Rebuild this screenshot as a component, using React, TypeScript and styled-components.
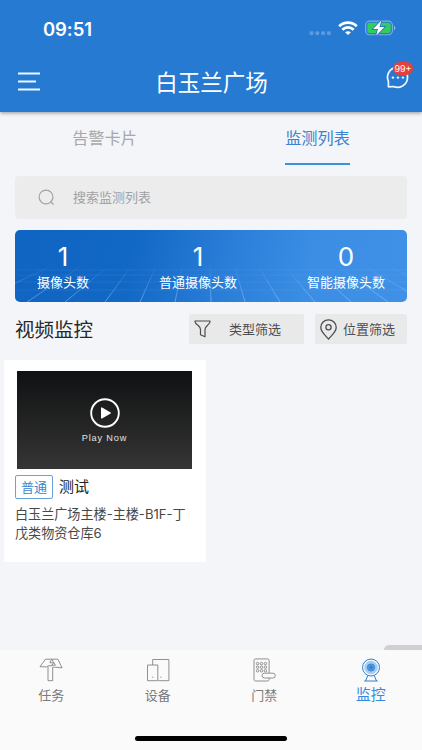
import React from 'react';
import styled, { createGlobalStyle } from 'styled-components';

const GlobalStyle = createGlobalStyle`
  * { box-sizing: border-box; }
  body { margin: 0; background: #f3f5f8; font-family: Inter, "Noto Sans CJK SC", sans-serif; }
`;

const Screen = styled.div`
  display: flex;
  flex-direction: column;
  width: 422px;
  height: 750px;
  overflow: hidden;
  background: #f3f5f8;
`;

const Header = styled.header`
  height: 112px;
  flex: none;
  color: #fff;
  background: #267ad1;
  box-shadow: 0 1px 4px rgba(0, 0, 0, 0.4);
`;

const StatusBar = styled.div`
  display: flex;
  align-items: center;
  justify-content: space-between;
  height: 56px;
  padding: 0 16px 0 43px;
`;

const Clock = styled.span`
  padding-top: 1px;
  font-size: 18.5px;
  font-weight: 600;
  letter-spacing: -0.1px;
  line-height: 20px;
`;

const NavBar = styled.div`
  display: grid;
  grid-template-columns: 60px 1fr 60px;
  height: 53px;
  padding: 0 8px 0 18px;
`;

const MenuButton = styled.div`
  display: flex;
  padding-top: 15px;
`;

const Title = styled.h1`
  margin: 11px 0 0;
  padding-right: 9px;
  font-size: 22.5px;
  font-weight: 400;
  line-height: 32px;
  text-align: center;
  white-space: nowrap;
`;

const MessageButton = styled.div`
  position: relative;
  justify-self: end;
  width: 30px;
  height: 30px;
  margin-top: 5px;
`;

const Badge = styled.span`
  position: absolute;
  top: 1px;
  left: 9px;
  width: 20px;
  height: 13px;
  border-radius: 7px;
  background: #e7403a;
  font-size: 9px;
  line-height: 13px;
  text-align: center;
`;

const Tabs = styled.nav`
  display: grid;
  grid-template-columns: 209px 217px;
  flex: none;
  height: 53px;
  justify-items: center;
`;

const Tab = styled.div<{ $active?: boolean }>`
  height: 53px;
  padding-top: 14px;
  font-size: 16.2px;
  line-height: 24px;
  color: ${p => (p.$active ? '#3983d1' : '#a6a8ab')};
  border-bottom: 2.5px solid ${p => (p.$active ? '#3793db' : 'transparent')};
`;

const SearchBox = styled.div`
  display: flex;
  align-items: center;
  gap: 18px;
  flex: none;
  height: 43px;
  margin: 11px 15px 0;
  padding-left: 23px;
  border-radius: 4px;
  background: #ececec;
  color: #a1a2a5;
  font-size: 13px;
`;

const SearchHint = styled.span`
  padding-bottom: 2px;
`;

const Stats = styled.section`
  display: grid;
  flex: none;
  height: 72px;
  margin: 11px 15px 0;
  border-radius: 5px;
  overflow: hidden;
  color: #fff;
  background: linear-gradient(100deg, #1064c2 0%, #1268c5 30%, #2b7fd9 55%, #3b8ee4 75%, #3f91e7 100%);
  & > * { grid-area: 1 / 1; }
`;

const StatRow = styled.div`
  display: flex;
  justify-content: space-between;
  padding: 11px 22px 0;
`;

const Stat = styled.div`
  display: flex;
  flex-direction: column;
  align-items: center;
`;

const StatValue = styled.span`
  font-size: 26px;
  line-height: 32px;
`;

const StatLabel = styled.span`
  font-size: 13px;
  line-height: 18px;
`;

const SectionHead = styled.div`
  display: flex;
  align-items: center;
  flex: none;
  height: 30px;
  margin: 12px 15px 0;
`;

const SectionTitle = styled.h2`
  margin: 0 auto 0 0;
  padding-top: 1px;
  font-size: 19.5px;
  font-weight: 400;
  line-height: 28px;
  color: #28292b;
`;

const Filter = styled.div<{ $w: number; $gap: number }>`
  display: flex;
  align-items: center;
  gap: ${p => p.$gap}px;
  width: ${p => p.$w}px;
  height: 30px;
  margin-left: 11px;
  padding-left: 5px;
  border-radius: 2px;
  background: #e9e9ea;
  color: #4c4d50;
  font-size: 13px;
  white-space: nowrap;
`;

const FilterLabel = styled.span`
  padding-bottom: 2px;
`;

const Card = styled.article`
  flex: none;
  width: 202px;
  height: 202px;
  margin: 16px 0 0 4px;
  padding: 11px 11px 0;
  background: #fff;
`;

const Video = styled.div`
  display: flex;
  flex-direction: column;
  align-items: center;
  width: 175px;
  height: 98px;
  margin-left: 2px;
  padding-top: 26px;
  background: linear-gradient(#101112, #353535);
`;

const PlayText = styled.span`
  margin-top: 2px;
  color: #e2e2e2;
  font: 9.2px/15px "Liberation Sans", sans-serif;
  letter-spacing: 0.85px;
`;

const CameraLine = styled.div`
  display: flex;
  align-items: center;
  gap: 6px;
  margin-top: 6px;
`;

const Tag = styled.span`
  width: 38px;
  height: 24px;
  border: 1px solid #6ba2dc;
  border-radius: 2px;
  color: #3a86d2;
  font-size: 13px;
  line-height: 22px;
  text-align: center;
`;

const CameraName = styled.span`
  font-size: 15px;
  line-height: 24px;
  color: #222;
`;

const Address = styled.p`
  margin: 6px 0 0;
  font-size: 13.1px;
  line-height: 18.5px;
  color: #47484a;
  white-space: nowrap;
`;

const Handle = styled.div`
  width: 44px;
  height: 5px;
  margin: auto -6px 0 auto;
  border-radius: 8px 8px 0 0;
  background: #d0d0d2;
`;

const Footer = styled.footer`
  flex: none;
  height: 100px;
  background: #fafafb;
`;

const FooterTabs = styled.div`
  display: grid;
  grid-template-columns: repeat(4, 106.5px);
  height: 85.5px;
  margin-left: -2px;
`;

const FooterTab = styled.div<{ $active?: boolean }>`
  display: flex;
  flex-direction: column;
  align-items: center;
  padding-top: 7px;
  color: ${p => (p.$active ? '#338be0' : '#7a7a7b')};
  font-size: ${p => (p.$active ? 15 : 13)}px;
  line-height: ${p => (p.$active ? 23 : 25)}px;
`;

const HomeBar = styled.div`
  width: 152px;
  height: 5.5px;
  margin: 0 auto;
  border-radius: 3px;
  background: #000;
`;

const StatusIcons = () => (
  <svg width="98" height="20" viewBox="0 0 98 20" fill="none">
    <g fill="#5d9be0">
      <rect x="1.6" y="13.2" width="3.8" height="3.8" rx="1.2" /><rect x="7.4" y="13.2" width="3.8" height="3.8" rx="1.2" />
      <rect x="13.2" y="13.2" width="3.8" height="3.8" rx="1.2" /><rect x="19" y="13.2" width="3.8" height="3.8" rx="1.2" />
    </g>
    <g stroke="#fff" strokeWidth="2.7">
      <path d="M31.2 8.2c5-4.8 12.6-4.8 17.6 0" />
      <path d="M34.3 11.7c3.2-3 8.2-3 11.4 0" />
    </g>
    <path d="M37.1 14.2c1.7-1.4 4.1-1.4 5.8 0L40 17.1z" fill="#fff" />
    <rect x="57.6" y="3.1" width="26.8" height="13.6" rx="4" stroke="#7eb0e5" strokeWidth="1.1" />
    <rect x="59.3" y="4.8" width="23.4" height="10.2" rx="2.5" fill="#32ce5b" />
    <path d="M86 7.5c1.8.8 1.8 4 0 4.8z" fill="#8db9e8" />
    <path d="M73.3 2.6L65.2 11h4.8l-1.8 6.6 8.2-8.7h-4.9z" fill="#fff" stroke="#267ad1" strokeWidth="1.8" paintOrder="stroke" />
  </svg>
);

const MenuIcon = () => (
  <svg width="22" height="20" viewBox="0 0 22 20" stroke="#e8f8ff" strokeWidth="1.9">
    <path d="M0 2.5h22M0 10.5h18M0 18.5h22" />
  </svg>
);

const MessageIcon = () => (
  <svg width="30" height="30" viewBox="0 0 30 30" fill="none">
    <path d="M4.4 25.8V20.4A10 10 0 1 1 9.6 25.5z" stroke="#effaff" strokeWidth="1.7" strokeLinejoin="round" />
    <g fill="#effaff"><circle cx="8.9" cy="16.6" r="1.2" /><circle cx="13.9" cy="16.6" r="1.2" /><circle cx="18.9" cy="16.6" r="1.2" /></g>
  </svg>
);

const SearchIcon = () => (
  <svg width="17" height="17" viewBox="0 0 17 17" fill="none" stroke="#a1a2a4" strokeWidth="1.2">
    <circle cx="8" cy="8" r="6.9" /><path d="M12.7 12.7l3 2.9" />
  </svg>
);

const Grid = () => (
  <svg width="392" height="72" viewBox="0 0 392 72" fill="none" stroke="#a5d0ff">
    <defs>
      <linearGradient id="fade" x1="0" y1="34" x2="0" y2="72" gradientUnits="userSpaceOnUse">
        <stop offset="0" stopColor="#a5d0ff" stopOpacity="0" />
        <stop offset="1" stopColor="#a5d0ff" stopOpacity=".5" />
      </linearGradient>
    </defs>
    <path d="M0 40h392M0 45h392M0 52h392M0 60h392" strokeOpacity=".1" />
    <path stroke="url(#fade)" d="M41 34L-40 72M69 34L12 72M96 34L50 72M118 34L90 72M142 34L125 72M168 34L160 72M195 34L196 72M219 34L230 72M242 34L265 72M268 34L300 72M294 34L336 72M320 34L373 72M346 34L410 72M370 34L445 72" />
  </svg>
);

const FunnelIcon = () => (
  <svg width="17" height="18" viewBox="0 0 17 18" fill="none" stroke="#4c4d50" strokeWidth="1.2" strokeLinejoin="round">
    <path d="M.9 1h15.2c0 2-1 3-2.5 4.2-1.7 1.4-2.6 2.3-2.6 4.3v7.2l-4.5-2V9.5c0-2-.8-2.9-2.5-4.3C2 4 .9 3 .9 1z" />
  </svg>
);

const PinIcon = () => (
  <svg width="17" height="21" viewBox="0 0 17 21" fill="none" stroke="#4c4d50" strokeWidth="1.3">
    <path d="M8.5 20C5.5 16.6.8 12.9.8 8.5a7.7 7.7 0 0 1 15.4 0c0 4.4-4.7 8.1-7.7 11.5z" />
    <circle cx="8.5" cy="8.3" r="2.6" />
  </svg>
);

const PlayIcon = () => (
  <svg width="32" height="32" viewBox="0 0 32 32">
    <circle cx="16" cy="16" r="13.8" fill="none" stroke="#fff" strokeWidth="1.9" />
    <path d="M12.7 11.1v9.8l8.6-4.9z" fill="#fff" stroke="#fff" strokeWidth="1.4" strokeLinejoin="round" />
  </svg>
);

const TaskIcon = () => (
  <svg width="26" height="26" viewBox="0 0 26 26" fill="none" stroke="#858585" strokeWidth=".9" strokeLinejoin="round">
    <path d="M7.5 2.2h6.3l-2 3.5 3.7.1-2 3-3.2-.1-1.6 1.2L2 9.7z" />
    <path d="M13.8 2.2h6.1l4.2 8.7-6.6-.7h-2.8v13.5H10V9.2M13.8 2.2l3.6 6h-4" />
  </svg>
);

const DeviceIcon = () => (
  <svg width="26" height="26" viewBox="0 0 26 26" fill="none" stroke="#858585" strokeWidth=".9">
    <path d="M7.7 8V2.5h16.2v21.2H13.3M2.5 8h10.3v15.7H2.5z" />
    <path d="M7.1 20.2h1.2M15.4 20.2h1.2" />
  </svg>
);

const DoorIcon = () => (
  <svg width="26" height="26" viewBox="0 0 26 26" fill="none" stroke="#858585" strokeWidth=".9">
    <path d="M18.1 16V3.5a1.6 1.6 0 0 0-1.6-1.6H4.6A1.6 1.6 0 0 0 3 3.5v18.9A1.6 1.6 0 0 0 4.6 24h11.9a1.6 1.6 0 0 0 1.6-1.6V21" />
    <rect x="11" y="16.2" width="13.3" height="4.8" rx="2.4" />
    {[6.6, 10.5, 14.4].flatMap(x => [6.6, 10.2, 13.8].map(y => <circle key={`${x}-${y}`} cx={x} cy={y} r="1.25" />))}
  </svg>
);

const CameraIcon = () => (
  <svg width="26" height="26" viewBox="0 0 26 26" fill="none" stroke="#347fce" strokeWidth="1">
    <circle cx="13" cy="10.5" r="8.5" fill="#f2f8ff" />
    <circle cx="13" cy="10.5" r="6.2" fill="#a9cdf3" stroke="#a1c8f2" />
    <circle cx="13" cy="10.5" r="3.6" fill="#5399e0" stroke="#3b85d3" />
    <circle cx="13" cy="10.5" r="1.2" fill="#347fce" />
    <path d="M9.8 18.5L7.5 24M16.2 18.5l2.3 5.5M6.3 24h13.4" />
  </svg>
);

const stats = [
  { value: 1, label: '摄像头数' },
  { value: 1, label: '普通摄像头数' },
  { value: 0, label: '智能摄像头数' },
];

const footerTabs = [
  { label: '任务', icon: <TaskIcon /> },
  { label: '设备', icon: <DeviceIcon /> },
  { label: '门禁', icon: <DoorIcon /> },
  { label: '监控', icon: <CameraIcon />, active: true },
];

export default function App() {
  return (
    <>
      <GlobalStyle />
      <Screen lang="zh-CN">
        <Header>
          <StatusBar><Clock>09:51</Clock><StatusIcons /></StatusBar>
          <NavBar>
            <MenuButton><MenuIcon /></MenuButton>
            <Title>白玉兰广场</Title>
            <MessageButton><MessageIcon /><Badge>99+</Badge></MessageButton>
          </NavBar>
        </Header>
        <Tabs><Tab>告警卡片</Tab><Tab $active>监测列表</Tab></Tabs>
        <SearchBox><SearchIcon /><SearchHint>搜索监测列表</SearchHint></SearchBox>
        <Stats>
          <Grid />
          <StatRow>
            {stats.map(s => (
              <Stat key={s.label}><StatValue>{s.value}</StatValue><StatLabel>{s.label}</StatLabel></Stat>
            ))}
          </StatRow>
        </Stats>
        <SectionHead>
          <SectionTitle>视频监控</SectionTitle>
          <Filter $w={115} $gap={18}><FunnelIcon /><FilterLabel>类型筛选</FilterLabel></Filter>
          <Filter $w={92} $gap={6}><PinIcon /><FilterLabel>位置筛选</FilterLabel></Filter>
        </SectionHead>
        <Card>
          <Video><PlayIcon /><PlayText>Play Now</PlayText></Video>
          <CameraLine><Tag>普通</Tag><CameraName>测试</CameraName></CameraLine>
          <Address>白玉兰广场主楼-主楼-B1F-丁<br />戊类物资仓库6</Address>
        </Card>
        <Handle />
        <Footer>
          <FooterTabs>
            {footerTabs.map(t => (
              <FooterTab key={t.label} $active={t.active}>{t.icon}<span>{t.label}</span></FooterTab>
            ))}
          </FooterTabs>
          <HomeBar />
        </Footer>
      </Screen>
    </>
  );
}
